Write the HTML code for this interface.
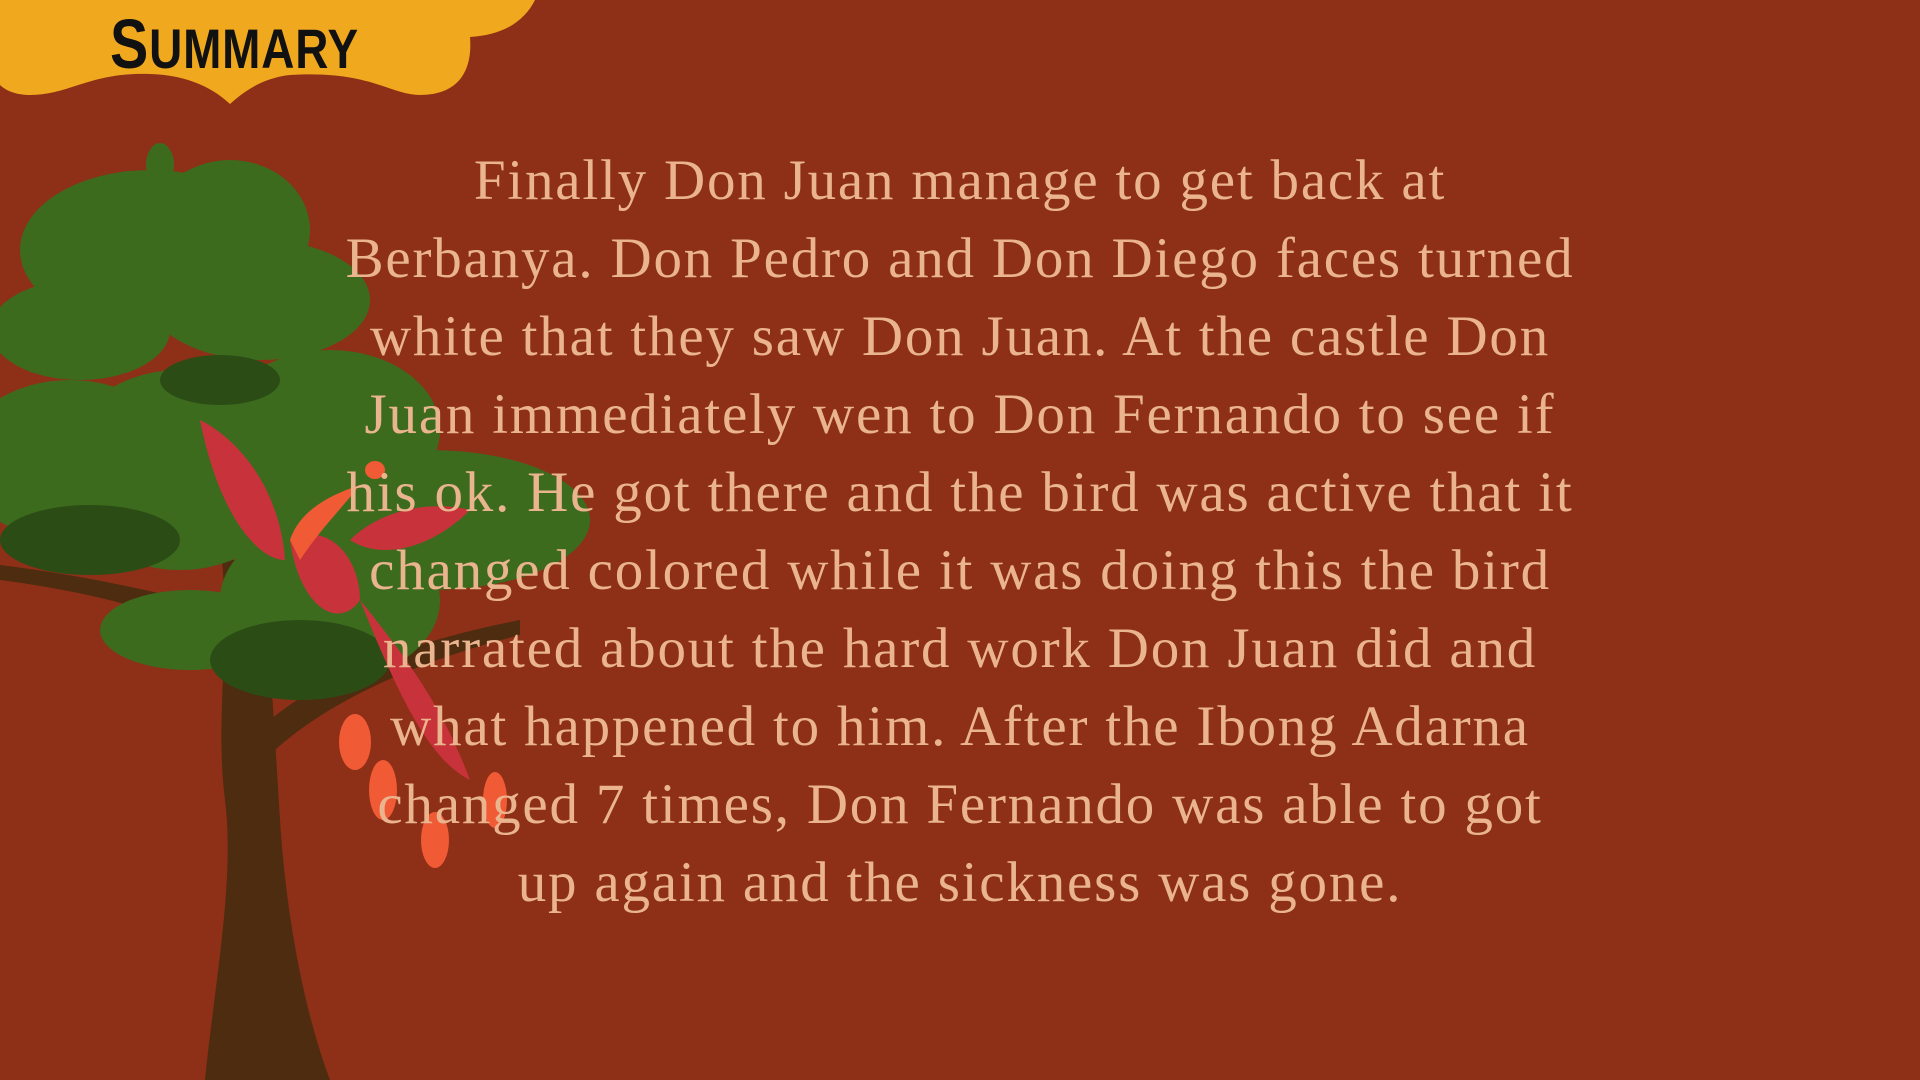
<!DOCTYPE html>
<html><head><meta charset="utf-8"><style>
html,body{margin:0;padding:0}
body{width:1920px;height:1080px;background:#8e2f17;position:relative;overflow:hidden;font-family:"Liberation Serif",serif}
.txt{position:absolute;left:260px;width:1400px;top:142px;text-align:center;color:#eab48f;font-size:57px;line-height:78px;letter-spacing:1.8px}
.title{position:absolute;left:110px;top:4px;font-family:"Liberation Sans",sans-serif;font-weight:bold;font-size:70px;color:#111;letter-spacing:1px;transform:scaleX(0.82);transform-origin:left}
.title small{font-size:56px}
</style></head><body>
<svg width="1920" height="1080" style="position:absolute;left:0;top:0">
<path d="M0 0 H535 C525 20 505 35 470 37 C473 75 455 95 420 95 C390 95 370 70 290 75 C260 78 240 95 230 104 C215 90 190 75 150 74 C90 72 70 95 30 95 C15 95 5 90 0 85 Z" fill="#f0a81e"/>
<path d="M222 560 C230 650 215 720 225 800 C235 880 215 980 205 1080 H330 C300 1000 285 900 280 820 C275 740 270 650 262 560 Z" fill="#4d2c10"/>
<path d="M230 610 C150 590 80 575 0 565 L0 580 C80 590 160 610 235 640 Z" fill="#4d2c10"/>
<path d="M270 720 C330 670 420 640 520 620 L520 635 C420 660 330 700 275 750 Z" fill="#4d2c10"/>
<g fill="#3d6b1e">
<ellipse cx="150" cy="250" rx="130" ry="80"/>
<ellipse cx="230" cy="230" rx="80" ry="70"/>
<ellipse cx="260" cy="300" rx="110" ry="60"/>
<ellipse cx="80" cy="330" rx="90" ry="50"/>
<ellipse cx="70" cy="460" rx="110" ry="80"/>
<ellipse cx="180" cy="470" rx="120" ry="100"/>
<ellipse cx="330" cy="430" rx="110" ry="80"/>
<ellipse cx="430" cy="520" rx="160" ry="70"/>
<ellipse cx="330" cy="600" rx="110" ry="80"/>
<ellipse cx="190" cy="630" rx="90" ry="40"/>
</g>
<g fill="#2b4d15">
<ellipse cx="90" cy="540" rx="90" ry="35"/>
<ellipse cx="300" cy="660" rx="90" ry="40"/>
<ellipse cx="220" cy="380" rx="60" ry="25"/>
</g>
<ellipse cx="160" cy="165" rx="14" ry="22" fill="#3d6b1e"/>
<g>
<path d="M200 420 C240 440 280 490 285 560 C260 560 220 520 200 420 Z" fill="#c8323a"/>
<path d="M470 510 C430 500 380 510 350 540 C380 560 430 550 470 510 Z" fill="#c8323a"/>
<path d="M290 540 C330 520 360 560 360 600 C340 630 300 610 290 540 Z" fill="#c8323a"/>
<path d="M290 540 C300 510 330 495 360 485 C340 510 320 530 300 560 Z" fill="#f05a34"/>
<path d="M360 600 C400 650 440 700 470 780 C430 760 400 700 360 600 Z" fill="#c8323a"/>
<ellipse cx="355" cy="742" rx="16" ry="28" fill="#f05a34"/>
<ellipse cx="383" cy="790" rx="14" ry="30" fill="#f05a34"/>
<ellipse cx="435" cy="840" rx="14" ry="28" fill="#f05a34"/>
<ellipse cx="495" cy="800" rx="12" ry="28" fill="#f05a34"/>
<ellipse cx="375" cy="470" rx="10" ry="9" fill="#f05a34"/>
</g>
</svg>
<div class="title">S<small>UMMARY</small></div>
<div class="txt">Finally Don Juan manage to get back at<br>Berbanya. Don Pedro and Don Diego faces turned<br>white that they saw Don Juan. At the castle Don<br>Juan immediately wen to Don Fernando to see if<br>his ok. He got there and the bird was active that it<br>changed colored while it was doing this the bird<br>narrated about the hard work Don Juan did and<br>what happened to him. After the Ibong Adarna<br>changed 7 times, Don Fernando was able to got<br>up again and the sickness was gone.</div>
</body></html>
